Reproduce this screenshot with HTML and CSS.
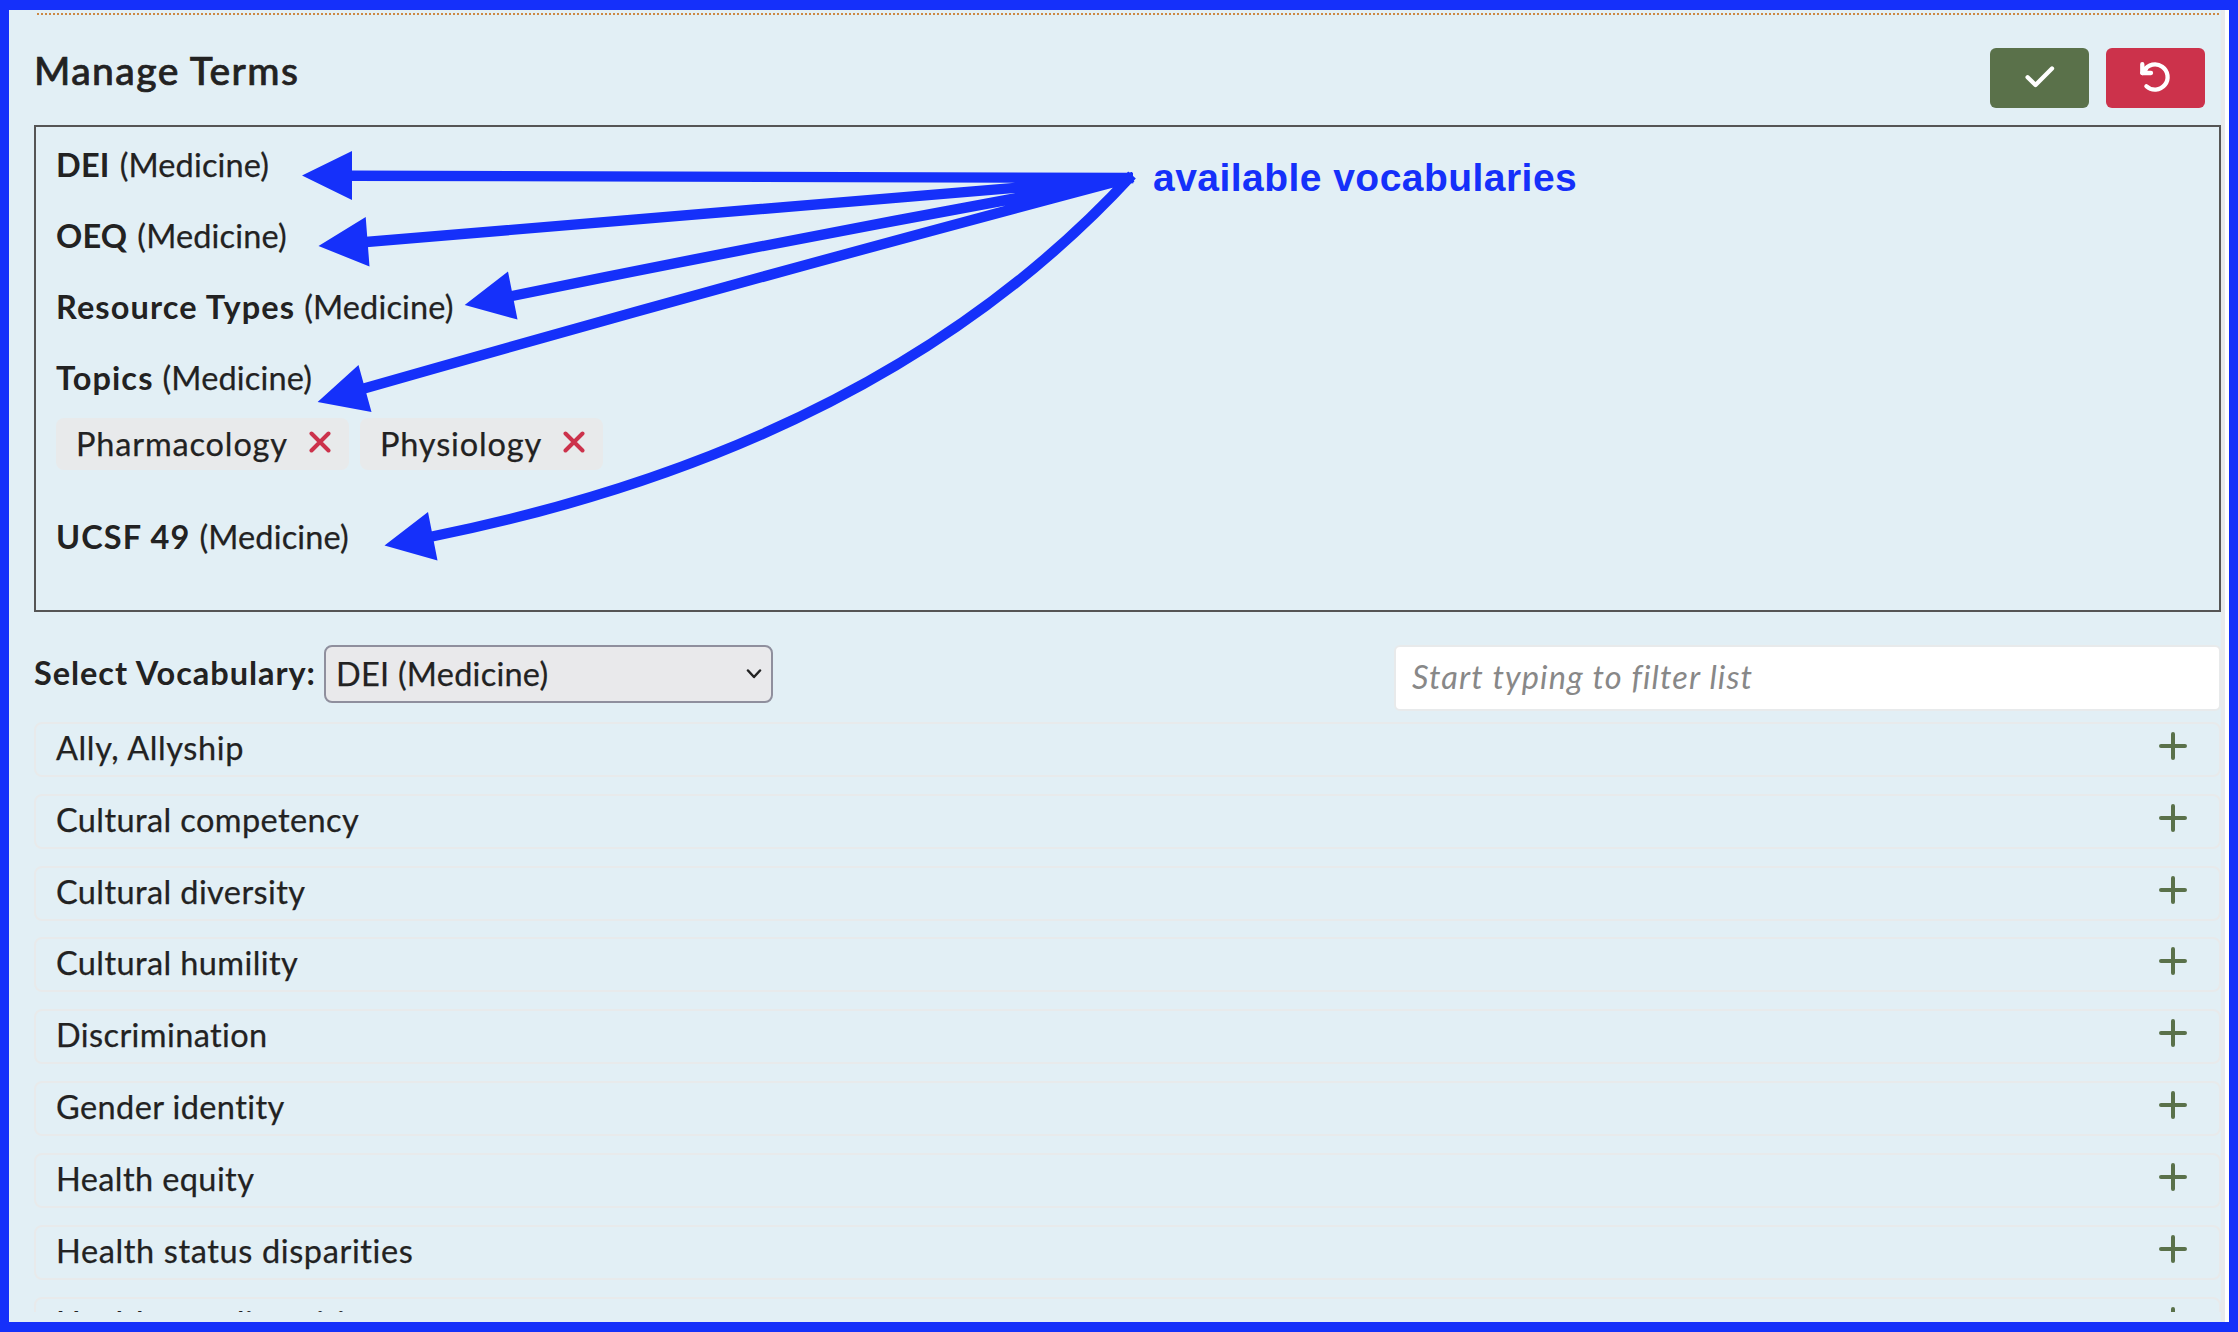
FILE: index.html
```html
<!DOCTYPE html>
<html lang="en">
<head>
<meta charset="utf-8">
<title>Manage Terms</title>
<link rel="stylesheet" href="styles.css">
</head>
<body>
<svg class="defs" aria-hidden="true">
  <symbol id="plus" viewBox="0 0 28 28"><path d="M14 2V26M2 14H26"/></symbol>
  <symbol id="times" viewBox="0 0 22 22"><path d="M2.5 2.5L19.5 19.5M19.5 2.5L2.5 19.5"/></symbol>
</svg>
<main class="panel">
  <header class="head">
    <h2 class="title">Manage Terms</h2>
    <div class="actions">
      <button class="btn save" aria-label="Save"><svg width="30" height="24" viewBox="0 0 30 24"><path d="M2.6 12.2L10.5 20L27 3.5"/></svg></button>
      <button class="btn cancel" aria-label="Cancel"><svg width="32" height="32" viewBox="0 0 32 32"><path d="M7.4 25.2A12.6 12.6 0 1 0 5.2 9.5"/><path d="M3.3 3.2V12H12"/><path d="M3.3 12L7 8"/></svg></button>
    </div>
  </header>
  <section class="selected">
    <div class="vocab"><b class="caps">DEI</b><span>(Medicine)</span></div>
    <div class="vocab"><b class="caps">OEQ</b><span>(Medicine)</span></div>
    <div class="vocab"><b>Resource Types</b><span>(Medicine)</span></div>
    <div class="vocab"><b>Topics</b><span>(Medicine)</span></div>
    <div class="chips">
      <div class="chip"><span>Pharmacology</span><svg><use href="#times"/></svg></div>
      <div class="chip phys"><span>Physiology</span><svg><use href="#times"/></svg></div>
    </div>
    <div class="vocab"><b>UCSF 49</b><span>(Medicine)</span></div>
  </section>
  <div class="controls">
    <label class="label">Select Vocabulary:</label>
    <div class="select"><span>DEI (Medicine)</span><svg width="16" height="10" viewBox="0 0 16 10"><path d="M2 1.5L8 8L14 1.5"/></svg></div>
    <input class="filter" placeholder="Start typing to filter list">
  </div>
  <ul class="terms">
    <li><span class="wide">Ally, Allyship</span><svg><use href="#plus"/></svg></li>
    <li><span>Cultural competency</span><svg><use href="#plus"/></svg></li>
    <li><span>Cultural diversity</span><svg><use href="#plus"/></svg></li>
    <li><span>Cultural humility</span><svg><use href="#plus"/></svg></li>
    <li><span>Discrimination</span><svg><use href="#plus"/></svg></li>
    <li><span>Gender identity</span><svg><use href="#plus"/></svg></li>
    <li><span>Health equity</span><svg><use href="#plus"/></svg></li>
    <li><span class="wide">Health status disparities</span><svg><use href="#plus"/></svg></li>
    <li><span class="wide">Healthcare disparities</span><svg><use href="#plus"/></svg></li>
  </ul>
</main>
<svg class="arrows" viewBox="0 0 2238 1332">
  <path class="shaft" d="M350 175.700L1133 178M366 242L1133 178M512 296Q820 233 1133 177M364 388.500Q740 281 1133 177M432 536.500Q884 445 1132 175"/>
  <path class="tip" d="M302 175.500L352 151V200ZM318.500 246L365.700 217L369.500 266.500ZM464.700 305L508 271.500L517.500 319.500ZM317.600 402L358.500 365L371.500 412ZM384.500 545.500L428 512L437.500 560.500Z"/>
</svg>
<div class="note">available vocabularies</div>
</body>
</html>
```

FILE: styles.css
```css
* { box-sizing: border-box; }
body {
  margin: 0;
  width: 2238px;
  height: 1332px;
  overflow: hidden;
  position: relative;
  padding: 10px 9px;
  background: #1530fa;
  font: 32.5px/40px Lato, sans-serif;
  color: #222;
}
.defs { position: absolute; width: 0; height: 0; }
svg { fill: none; stroke-linecap: round; stroke-linejoin: round; flex: none; }
.panel {
  height: 1312px;
  overflow: hidden;
  background: #e2eff5;
  border-right: 4px solid #fff;
  box-shadow: inset -4px 0 #e8eaeb;
  padding: 3px 4px 0 25px;
}
.head {
  display: flex;
  justify-content: space-between;
  height: 112px;
  padding: 35px 16px 0 0;
  background: repeating-linear-gradient(90deg, #c84 0 2px, transparent 2px 4px) 3px 0 / 2182px 2px no-repeat;
}
.title { margin: 0; padding: 2px 0 0 0; font-size: 39px; line-height: 40px; font-weight: 500; letter-spacing: 1.4px; -webkit-text-stroke: .7px #222; }
.actions { display: flex; gap: 17px; }
.btn { width: 99px; height: 60px; border: 0; border-radius: 6px; padding: 0; display: flex; align-items: center; justify-content: center; }
.btn svg { stroke: #fff; stroke-width: 4.3; }
.save { background: #5a714a; }
.cancel { background: #cc324b; }
.save svg { margin-bottom: 3px; }
.cancel svg { margin: 0 2px 3px 0; }
.selected { width: 2187px; height: 487px; border: 2px solid #555; padding: 18px 20px; }
.vocab { display: flex; gap: 9px; height: 71px; white-space: nowrap; letter-spacing: .15px; }
.vocab b { letter-spacing: 1.1px; }
.vocab .caps { letter-spacing: .2px; padding-right: 1px; }
.chips { display: flex; gap: 11px; height: 99px; margin-top: -11px; }
.chip { display: flex; align-items: center; justify-content: space-between; width: 293px; height: 52px; padding: 0 18px 0 20px; border-radius: 8px; background: #e8eaeb; letter-spacing: .85px; }
.phys { width: 243px; }
.chip svg { width: 22px; height: 22px; stroke: #cc324b; stroke-width: 4; margin-bottom: 5px; }
.controls { display: flex; height: 110px; padding-top: 33px; }
.label { font-weight: 700; width: 290px; padding-top: 8px; white-space: nowrap; letter-spacing: .95px; }
.select { display: flex; align-items: center; justify-content: space-between; width: 449px; height: 58px; padding: 0 9px 0 10px; border: 2px solid #8f8f9d; border-radius: 8px; background: #e9e9eb; letter-spacing: .25px; }
.select svg { stroke: #222; stroke-width: 2.5; }
.filter { margin-left: auto; width: 827px; height: 66px; padding: 0 16px 3px; border: 2px solid #e8eaeb; border-radius: 6px; background: #fff; font: italic 32.5px Lato, sans-serif; letter-spacing: 1.13px; }
.filter::placeholder { color: #888; }
.vocab span, .chip span, .select span, .terms span { -webkit-text-stroke: .25px #222; }
.terms { list-style: none; margin: 0; padding: 0; height: 590px; overflow: hidden; display: flex; flex-direction: column; gap: 16.83px; }
.terms li { flex: none; display: flex; justify-content: space-between; width: 2187px; height: 55px; padding: 4px 32px 0 20px; border: 2px solid #e8eaeb; border-radius: 8px; letter-spacing: .4px; }
.terms .wide { letter-spacing: .62px; }
.terms svg { width: 28px; height: 28px; stroke: #5a714a; stroke-width: 4; margin-top: 4px; }
.arrows { position: absolute; left: 0; top: 0; width: 2238px; height: 1332px; }
.shaft { stroke: #1530fa; stroke-width: 10.4; stroke-linecap: butt; stroke-linejoin: miter; }
.tip { fill: #1530fa; }
.note { position: absolute; left: 1153px; top: 154px; font: 700 39px/48px "Liberation Sans", Arial, sans-serif; color: #1530fa; white-space: nowrap; letter-spacing: .46px; }
```
